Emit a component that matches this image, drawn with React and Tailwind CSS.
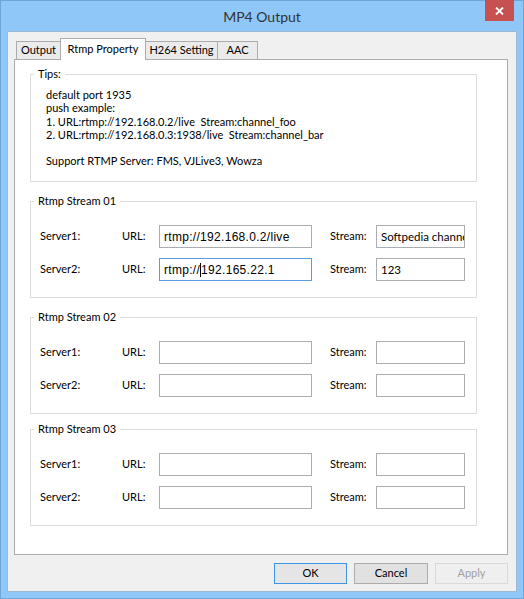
import React from 'react';

const STREAMS = [
  {
    name: 'Rtmp Stream 01',
    mt: 'mt-[12px]',
    rows: [
      { server: 'Server1:', url: 'rtmp://192.168.0.2/live', stream: 'Softpedia channel' },
      { server: 'Server2:', url: 'rtmp://192.165.22.1', stream: '123', focused: true },
    ],
  },
  { name: 'Rtmp Stream 02', mt: 'mt-[12px]', rows: [{ server: 'Server1:' }, { server: 'Server2:' }] },
  { name: 'Rtmp Stream 03', mt: 'mt-[8px]', rows: [{ server: 'Server1:' }, { server: 'Server2:' }] },
];

function TextBox({ value, focused, width, url }) {
  return (
    <div
      className={`h-[23px] ${width} border bg-white overflow-hidden whitespace-nowrap flex items-center px-[4px] ${focused ? 'border-[#569de5]' : 'border-[#abadb3]'} ${url ? "font-['Liberation_Sans',sans-serif] text-[12px] tracking-[0.3px]" : 'text-[11.5px]'}`}
    >
      {focused && value ? (
        <>
          <span>rtmp://</span>
          <span className="inline-block w-px h-[14px] bg-black" />
          <span>{value.replace('rtmp://', '')}</span>
        </>
      ) : (
        value
      )}
    </div>
  );
}

function StreamGroup({ name, rows, mt }) {
  return (
    <fieldset className={`ml-[15px] ${mt} w-[447px] h-[104px] border border-[#dcdcdc] px-0`}>
      <legend className="ml-[3px] px-[4px] leading-[14px]">{name}</legend>
      <div className="pl-[9px] pt-[17px] flex flex-col gap-[10px]">
        {rows.map((r, i) => (
          <div key={i} className="flex items-center">
            <span className="w-[82px]">{r.server}</span>
            <span className="w-[37px]">URL:</span>
            <TextBox value={r.url} focused={r.focused} width="w-[153px]" url />
            <span className="ml-[18px] w-[46px]">Stream:</span>
            <TextBox value={r.stream} width="w-[89px]" />
          </div>
        ))}
      </div>
    </fieldset>
  );
}

export default function App() {
  return (
    <div className="w-[524px] h-[599px] bg-[#8ec7f8] border border-[#6fa6d8] flex flex-col font-['Lato',sans-serif] text-[11px] text-black">
      {/* Title bar */}
      <div className="relative h-[30px] flex items-center justify-center">
        <span className="text-[14px] text-[#333] pt-[1px]">MP4 Output</span>
        <div className="absolute top-[-1px] right-[9px] w-[29px] h-[21px] bg-[#c75050] flex items-center justify-center">
          <svg width="9" height="8" viewBox="0 0 9 8">
            <path d="M1 0.5 L8 7.5 M8 0.5 L1 7.5" stroke="white" strokeWidth="1.8" />
          </svg>
        </div>
      </div>

      {/* Client area */}
      <div className="flex-1 mx-[6px] mb-[6px] bg-[#f0f0f0] border border-[#9cb9d4] flex flex-col">
        {/* Tabs */}
        <div className="mt-[6px] pl-[8px] flex items-end h-[21px]">
          <div className="w-[45px] h-[18px] border border-b-0 border-[#acacac] bg-[#ebebeb] flex items-center justify-center">Output</div>
          <div className="relative z-10 -ml-px w-[86px] h-[22px] -mb-px border border-b-0 border-[#acacac] bg-white flex items-start pt-[2px] justify-center">Rtmp Property</div>
          <div className="-ml-px w-[73px] h-[18px] border border-b-0 border-[#acacac] bg-[#ebebeb] flex items-center justify-center">H264 Setting</div>
          <div className="-ml-px w-[41px] h-[18px] border border-b-0 border-[#acacac] bg-[#ebebeb] flex items-center justify-center">AAC</div>
        </div>

        {/* Panel */}
        <div className="ml-[6px] w-[494px] h-[496px] border border-[#acacac] bg-white">
          <fieldset className="ml-[15px] mt-[7px] w-[447px] h-[115px] border border-[#dcdcdc] px-0">
            <legend className="ml-[3px] px-[4px] leading-[14px]">Tips:</legend>
            <div className="pl-[15px] pt-[7px] leading-[13.3px] whitespace-pre">
              <div>default port 1935</div>
              <div>push example:</div>
              <div>1. URL:rtmp://192.168.0.2/live  Stream:channel_foo</div>
              <div>2. URL:rtmp://192.168.0.3:1938/live  Stream:channel_bar</div>
              <div>&nbsp;</div>
              <div>Support RTMP Server: FMS, VJLive3, Wowza</div>
            </div>
          </fieldset>
          {STREAMS.map((s) => (
            <StreamGroup key={s.name} {...s} />
          ))}
        </div>

        {/* Buttons */}
        <div className="mt-[8px] pr-[8px] flex justify-end gap-[7px]">
          <button className="w-[73px] h-[21px] border border-[#3c94e6] bg-[#e5e5e5]">OK</button>
          <button className="w-[74px] h-[21px] border border-[#acacac] bg-[#e1e1e1]">Cancel</button>
          <button className="w-[73px] h-[21px] border border-[#d9d9d9] bg-[#efefef] text-[#a0a0a0]">Apply</button>
        </div>
      </div>
    </div>
  );
}
